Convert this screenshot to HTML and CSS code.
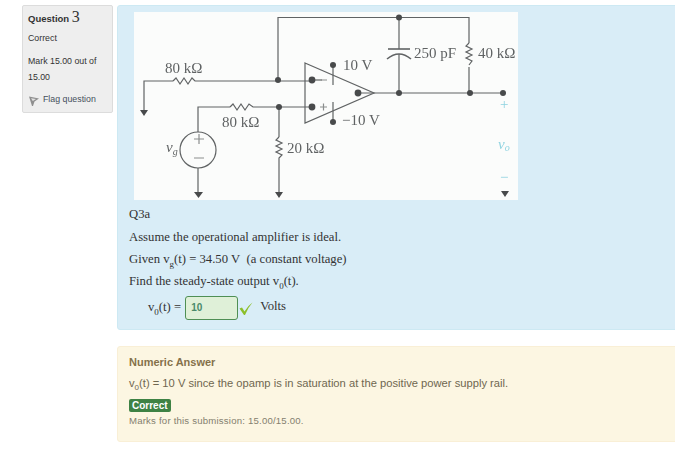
FILE: index.html

```html
<!DOCTYPE html>
<html lang="en">
<head>
  <meta charset="UTF-8">
  <title>Question 3</title>
  <link rel="stylesheet" href="styles.css">
</head>
<body>
  <div class="que">
    <div class="info">
      <h3 class="qno">Question <span class="qnum">3</span></h3>
      <div class="state">Correct</div>
      <div class="grade">Mark 15.00 out of 15.00</div>
      <div class="flag">
        <svg class="flag-icon" viewBox="0 0 12 12" width="12" height="12">
          <path d="M1 1.500 L11 3.500 L6.500 6.500 L5 11 L4 11 Z" fill="#8f8f8f"/>
          <path d="M3 3.200 L8 4 L4.800 6 Z" fill="#e2e2e2"/>
        </svg>
        Flag question
      </div>
    </div>
    <div class="main">
      <div class="formulation">
        <svg class="circuit" viewBox="134 12 384 188" width="384" height="188">
          <rect x="134" y="12" width="384" height="188" fill="#fbfcfb"/>
          <g fill="none" stroke="#606364" stroke-width="1.2">
            <!-- wires -->
            <path d="M278 80 V17.5 H469 V43"/>
            <path d="M469 67 V93"/>
            <path d="M144 110 V81 H173"/>
            <path d="M173 81 l3 -3 l4 6 l4 -6 l4 6 l4 -6 l3 3 H312"/>
            <path d="M198 132 V107 H230"/>
            <path d="M230 107 l3 -3 l4 6 l4 -6 l4 6 l4 -6 l4 3 H312"/>
            <path d="M279 107 V137"/>
            <path d="M279 137 l-3 3 l6 3 l-6 3 l6 3 l-6 3 l6 3 l-3 3 V192"/>
            <path d="M469 43 l-3 3 l6 3 l-6 3 l6 3 l-6 3 l6 3 l-3 4"/>
            <path d="M198 168 V192"/>
            <path d="M312 80 H322"/>
            <path d="M358 93 H503"/>
            <path d="M399 17.5 V49"/>
            <path d="M388 49 H410" stroke-width="1.6"/>
            <path d="M387 59 Q399 49 411 59" stroke-width="1.6"/>
            <path d="M399 54 V93"/>
            <path d="M333 65 V85"/>
            <path d="M333 122 V102"/>
            <!-- op amp and source -->
            <path d="M305 63 L374 93 L305 123 Z"/>
            <circle cx="198" cy="150" r="18"/>
            <path d="M194 139 H204 M199 134 V144 M194 158 H204" stroke="#8b8e8e"/>
            <path d="M321 80 H327 M320 107 H327 M323.500 103.500 V110.500" stroke="#8b8e8e"/>
          </g>
          <g fill="#484a4b">
            <circle cx="278" cy="80" r="3"/>
            <circle cx="312" cy="80" r="3.400"/>
            <circle cx="279" cy="107" r="3"/>
            <circle cx="312" cy="107" r="3.400"/>
            <circle cx="358" cy="93" r="3.400"/>
            <circle cx="399" cy="17.500" r="3"/>
            <circle cx="399" cy="93" r="3"/>
            <circle cx="470" cy="93" r="3"/>
            <circle cx="503" cy="93" r="3"/>
            <circle cx="333" cy="65" r="3"/>
            <circle cx="333" cy="122" r="3"/>
            <path d="M140 110 H148 L144 116 Z"/>
            <path d="M194 192 H203 L198.500 198 Z"/>
            <path d="M275 192 H283 L279 198 Z"/>
            <path d="M501 191 H509 L505 197 Z"/>
          </g>
          <g class="circuit-label">
            <text x="165" y="73">80 kΩ</text>
            <text x="222" y="127">80 kΩ</text>
            <text x="287" y="153">20 kΩ</text>
            <text x="343" y="70">10 V</text>
            <text x="342" y="125">−10 V</text>
            <text x="414" y="58">250 pF</text>
            <text x="478" y="58">40 kΩ</text>
            <text class="var" x="166" y="152">v<tspan class="var-sub" dy="3">g</tspan></text>
          </g>
          <g class="circuit-output">
            <text x="500" y="109">+</text>
            <text class="var" x="498" y="149">v<tspan class="var-sub" dy="2">o</tspan></text>
            <text x="500" y="182">−</text>
          </g>
        </svg>
        <p class="q-title">Q3a</p>
        <p>Assume the operational amplifier is ideal.</p>
        <p class="tight">Given v<sub>g</sub>(t) = 34.50 V&nbsp; (a constant voltage)</p>
        <p class="tight">Find the steady-state output v<sub>0</sub>(t).</p>
        <div class="answer">
          <span class="answer-label">v<sub>0</sub>(t) =</span>
          <span class="answer-input">10</span>
          <svg class="tick" viewBox="0 0 14 14" width="14" height="15">
            <path d="M0.500 7 L3 6 L5.500 10 Q9 4 13.500 1 Q9 6 6 13.500 L5 13.500 Z" fill="#8cbf2a"/>
          </svg>
          <span class="unit">Volts</span>
        </div>
      </div>
      <div class="outcome">
        <h4 class="outcome-title">Numeric Answer</h4>
        <p class="outcome-text">v<sub>0</sub>(t) = 10 V since the opamp is in saturation at the positive power supply rail.</p>
        <span class="badge">Correct</span>
        <div class="marks">Marks for this submission: 15.00/15.00.</div>
      </div>
    </div>
  </div>
</body>
</html>
```

FILE: styles.css

```css
html, body {
  height: 100%;
  overflow: hidden;
}
body {
  margin: 0;
  background: #fff;
  font-family: "Liberation Sans", Arial, sans-serif;
  font-size: 9px;
  color: #333;
}
.que {
  display: flex;
  align-items: flex-start;
  gap: 4px;
  padding: 5px 0 0 22px;
  margin-right: -10px;
}
.info {
  box-sizing: border-box;
  flex: none;
  width: 91px;
  height: 108px;
  padding: 2px 5px;
  background: #eee;
  border: 1px solid #dcdcdc;
  border-radius: 2px;
  line-height: 16px;
}
.qno {
  margin: 0;
  font-size: 9.500px;
  font-weight: 700;
  line-height: 18px;
  color: #333;
}
.qnum {
  font-family: "Liberation Serif", serif;
  font-size: 16px;
  font-weight: 400;
}
.state {
  margin-top: 2px;
  font-size: 8.800px;
}
.grade {
  margin-top: 7px;
  font-size: 8.800px;
}
.flag {
  display: flex;
  align-items: center;
  gap: 3px;
  margin-top: 6px;
  font-size: 8.800px;
  color: #45505c;
}
.flag-icon {
  margin-top: 3px;
}
.main {
  flex: 1;
  min-width: 0;
}
.formulation {
  box-sizing: border-box;
  height: 325px;
  padding: 6px 11px 0 11px;
  background: #d9edf7;
  border: 1px solid #cde9f3;
  border-radius: 3px;
  font-family: "Liberation Serif", serif;
  font-size: 12.700px;
  color: #333;
}
.formulation p {
  margin: 0 0 8px;
  line-height: 14px;
}
.formulation p.tight {
  margin-bottom: 8px;
}
.formulation p.q-title {
  margin-bottom: 9px;
}
.formulation sub {
  font-size: 9px;
  line-height: 0;
}
.circuit {
  display: block;
  margin: 0 0 7px 5px;
  filter: blur(0.35px);
}
.circuit-label {
  font-family: "Liberation Serif", serif;
  font-size: 15px;
  fill: #5f6263;
}
.circuit-output {
  font-family: "Liberation Serif", serif;
  font-size: 15px;
  fill: #8fd3e0;
}
.var {
  font-style: italic;
}
.var-sub {
  font-size: 10px;
}
.answer {
  display: flex;
  align-items: center;
  margin: 2px 0 0 19px;
}
.answer-label {
  margin-bottom: 1px;
}
.answer-input {
  box-sizing: border-box;
  width: 53px;
  height: 24px;
  margin-left: 4px;
  padding-left: 5px;
  background: #dff0d8;
  border: 1px solid #4f8f55;
  border-radius: 3px;
  font-family: "Liberation Sans", Arial, sans-serif;
  font-size: 10px;
  font-weight: 700;
  line-height: 22px;
  color: #4a8a6a;
}
.tick {
  margin: 1px 0 0 1px;
}
.unit {
  margin: 0 0 3px 7px;
}
.outcome {
  box-sizing: border-box;
  height: 96px;
  margin-top: 16px;
  padding: 8px 11px;
  background: #fcf6e2;
  border: 1px solid #f9efd6;
  border-radius: 3px;
  color: #6f6750;
}
.outcome-title {
  margin: 0;
  font-size: 11px;
  font-weight: 700;
  line-height: 14px;
  color: #85714a;
}
.outcome-text {
  margin: 6px 0 0;
  font-size: 11.200px;
  line-height: 16px;
}
.outcome-text sub {
  font-size: 8px;
  line-height: 0;
}
.badge {
  display: inline-block;
  margin-top: 8px;
  padding: 0 3px;
  background: #3e8244;
  border-radius: 2px;
  font-size: 10px;
  font-weight: 700;
  line-height: 13px;
  color: #fff;
}
.marks {
  margin-top: 2px;
  font-size: 9.600px;
  line-height: 14px;
  letter-spacing: 0.2px;
  color: #84806f;
}
```
